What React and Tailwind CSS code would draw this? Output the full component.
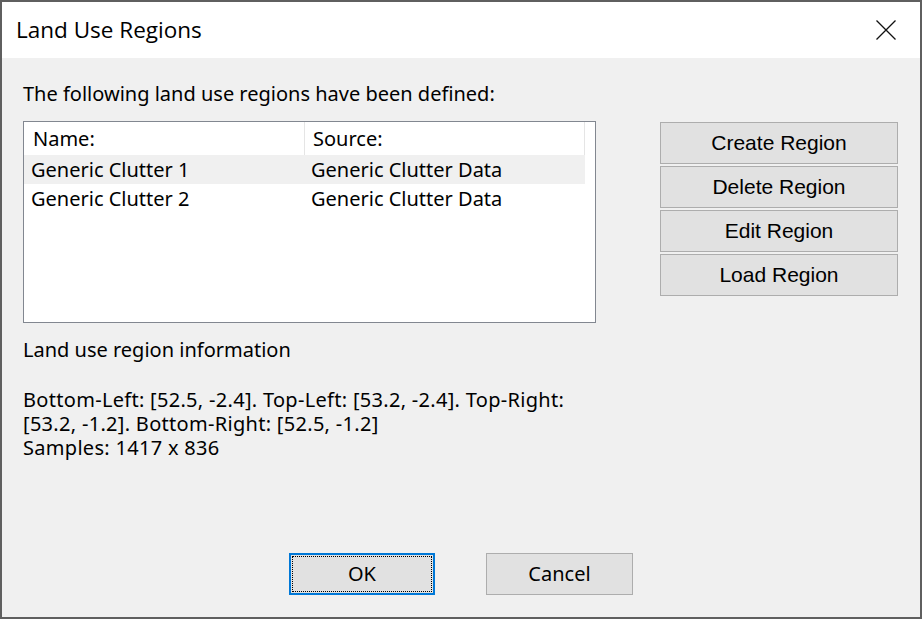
const regions = [
  { name: "Generic Clutter 1", source: "Generic Clutter Data" },
  { name: "Generic Clutter 2", source: "Generic Clutter Data" },
];

const actions = ["Create Region", "Delete Region", "Edit Region", "Load Region"];

function CloseIcon() {
  return (
    <svg width="20" height="20" viewBox="0 0 20 20" className="block">
      <path d="M0.5 0.5 L19.5 19.5 M19.5 0.5 L0.5 19.5" stroke="#111" strokeWidth="1.3" fill="none" />
    </svg>
  );
}

export default function App() {
  return (
    <div className="w-[922px] h-[619px] border-2 border-[#5f5f5f] bg-[#f0f0f0] flex flex-col text-black font-['Noto_Sans',sans-serif]">
      {/* title bar */}
      <div className="h-[56px] bg-white flex items-center justify-between pl-[14px] pr-[24px] shrink-0">
        <span className="text-[22.5px] leading-[28px] font-['Open_Sans',sans-serif]">Land Use Regions</span>
        <CloseIcon />
      </div>

      <div className="flex-1 flex flex-col pt-[24px] pl-[21px] pb-[22px] text-[20px] leading-[24px]">
        <p>The following land use regions have been defined:</p>

        <div className="flex mt-[15px]">
          <div className="w-[573px] h-[202px] border border-[#828790] bg-white flex flex-col">
            <div className="flex h-[33px] w-[561px] shrink-0">
              <div className="w-[281px] border-r border-[#e5e5e5] pl-[9px] flex items-center">Name:</div>
              <div className="flex-1 border-r border-[#e5e5e5] pl-[8px] flex items-center">Source:</div>
            </div>
            {regions.map((r, i) => (
              <div
                key={i}
                className={
                  "flex h-[29px] w-[561px] items-center " + (i === 0 ? "bg-[#f0f0f0]" : "")
                }
              >
                <div className="w-[281px] pl-[7px]">{r.name}</div>
                <div className="flex-1 pl-[6px]">{r.source}</div>
              </div>
            ))}
          </div>

          <div className="ml-[64px] mt-[1px] w-[238px] flex flex-col gap-[2px] font-['Liberation_Sans',sans-serif] text-[21px]">
            {actions.map((a) => (
              <button
                key={a}
                className="h-[42px] border border-[#adadad] bg-[#e1e1e1] flex items-center justify-center"
              >
                {a}
              </button>
            ))}
          </div>
        </div>

        <p className="mt-[15px]">Land use region information</p>

        <div className="mt-[26px] w-[600px] tracking-[0.3px]">
          <p>
            Bottom-Left: [52.5, -2.4]. Top-Left: [53.2, -2.4]. Top-Right:
            <br />
            [53.2, -1.2]. Bottom-Right: [52.5, -1.2]
          </p>
          <p>Samples: 1417 x 836</p>
        </div>

        <div className="mt-auto flex justify-center gap-[51px] pr-[21px]">
          <button className="w-[146px] h-[42px] border-2 border-[#0078d7] bg-[#e1e1e1] p-[1px]">
            <span className="w-full h-full flex items-center justify-center border border-dotted border-black">
              OK
            </span>
          </button>
          <button className="w-[147px] h-[42px] border border-[#adadad] bg-[#e1e1e1] flex items-center justify-center">
            Cancel
          </button>
        </div>
      </div>
    </div>
  );
}
